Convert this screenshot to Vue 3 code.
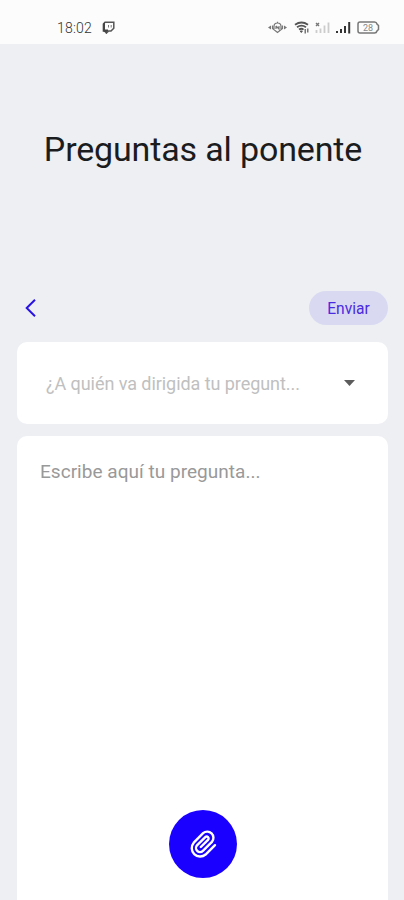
<template>
  <div class="screen">
    <header class="status">
      <span class="time">18:02</span>
      <svg class="twitch" width="13" height="13" viewBox="0 0 13 13">
        <path d="M3 1.200h8.800v6L9 10H6.600L4.500 12v-2H1.400V3z" fill="none" stroke="#555" stroke-width="1.500" />
        <path d="M1 3l2-2v7.500h3V10H4.500v2.500L1 10z" fill="#444" />
        <path d="M6.500 4v2.500M9.200 4v2.500" stroke="#777" stroke-width="1" />
      </svg>
      <svg class="vibrate" width="19" height="13" viewBox="0 0 19 13">
        <path d="M0 6.500L3 4.500v4zM19 6.500l-3-2v4z" fill="#777" />
        <path d="M6 9V5.500a3.500 3.500 0 0 1 7 0V9M4.500 4.500v3l5 4 5-4v-3M9.500 2V.8M8 5v3M8 5l3 3V5" fill="none" stroke="#777" stroke-width="1.200" />
      </svg>
      <svg class="wifi" width="16" height="13" viewBox="0 0 16 13" fill="none" stroke="#555">
        <path d="M1 3.800q6.500-4.600 13 0M3 6.300q4.500-3.300 9 0M5 8.600q2.500-1.800 4.500 0" stroke-width="1.800" />
        <path d="M6.300 10h2l-1 1.500z" fill="#555" />
        <path d="M11.200 8v4.500M13.800 7.500v4" stroke-width="1.200" />
      </svg>
      <svg class="signal" width="15" height="13" viewBox="0 0 15 13">
        <path d="M1 2l3 3M4 2L1 5" stroke="#777" stroke-width="1.400" />
        <path d="M1.500 9v3M5.500 7.500V12M9.500 4.500V12M13.500 1.500V12" stroke="#ccc" stroke-width="1.800" />
      </svg>
      <svg class="signal" width="15" height="13" viewBox="0 0 15 13">
        <path d="M1 10v2M5 8v4M9 5v7M13.200 1V12.500" stroke="#333" stroke-width="2" />
      </svg>
      <span class="battery">
        <svg width="23" height="13" viewBox="0 0 23 13">
          <path d="M3 1h14.500q2 0 2.500 2l1.500 1.500v4L20 10q-.5 2-2.500 2H3q-2 0-2-2V3q0-2 2-2z" fill="none" stroke="#777" stroke-width="1.500" />
        </svg>
        <span class="level">28</span>
      </span>
    </header>

    <h1 class="title">Preguntas al ponente</h1>

    <nav class="actions">
      <button class="back" aria-label="Volver">
        <svg width="12" height="20" viewBox="0 0 12 20">
          <path d="M11 1.700L2.700 10l8.300 8.300" fill="none" stroke="#2a12e0" stroke-width="2" />
        </svg>
      </button>
      <button class="send">Enviar</button>
    </nav>

    <div class="card select">
      <span class="select-text">¿A quién va dirigida tu pregunt...</span>
      <svg width="11" height="6" viewBox="0 0 11 6">
        <path d="M0 0h11L5.500 6z" fill="#5c5c5c" />
      </svg>
    </div>

    <div class="card question">
      <span class="placeholder">Escribe aquí tu pregunta...</span>
      <button class="attach" aria-label="Adjuntar">
        <svg width="30" height="30" viewBox="0 0 30 30">
          <path
            fill="none"
            stroke="#fff"
            stroke-width="2.400"
            stroke-linecap="round"
            d="M27 16.200L17.600 25.500A8.400 8.400 0 0 1 5.760 13.660L15.100 4.200A6.200 6.200 0 0 1 23.900 12.900L14.900 21.900A4 4 0 0 1 9.200 16.200L17.300 8.100A1.900 1.900 0 0 1 20 10.800L12.800 18"
          />
        </svg>
      </button>
    </div>
  </div>
</template>

<script setup>
</script>

<style>
body {
  margin: 0;
  background: #edeff3;
}
</style>

<style scoped>
.screen {
  width: 404px;
  height: 900px;
  overflow: hidden;
  display: flex;
  flex-direction: column;
  background: #edeff3;
  font-family: Roboto, "Liberation Sans", sans-serif;
}
button {
  border: 0;
  padding: 0;
  background: none;
  font-family: inherit;
}
svg {
  display: block;
  flex: none;
}
.status {
  box-sizing: border-box;
  height: 44px;
  flex: none;
  display: flex;
  align-items: center;
  padding: 11px 24px 0 57px;
  background: #fcfcfc;
}
.time {
  width: 45px;
  font-size: 14px;
  font-weight: 300;
  line-height: 16px;
  letter-spacing: 0.2px;
  color: #333;
}
.vibrate {
  margin-left: auto;
}
.wifi {
  margin-left: 7px;
}
.signal {
  margin-left: 5px;
}
.signal + .signal {
  margin-left: 6px;
}
.battery {
  position: relative;
  margin-left: 6px;
}
.level {
  position: absolute;
  top: 1px;
  left: 6px;
  font-size: 9px;
  line-height: 12px;
  color: #888;
}
.title {
  margin: 84px 0 0;
  padding-left: 2px;
  height: 42px;
  line-height: 42px;
  text-align: center;
  font-size: 34px;
  font-weight: 400;
  letter-spacing: -0.15px;
  color: #1b1c1e;
  white-space: nowrap;
}
.actions {
  margin-top: 121px;
  height: 34px;
  flex: none;
  display: flex;
  justify-content: space-between;
  align-items: center;
  padding: 0 16px 0 24px;
}
.send {
  width: 79px;
  height: 34px;
  padding-top: 2px;
  border-radius: 17px;
  background: #d9d9f2;
  color: #4a2be0;
  font-size: 15.6px;
  line-height: 32px;
}
.card {
  margin: 0 16px 0 17px;
  box-sizing: border-box;
  background: #fff;
  border-radius: 10px;
}
.select {
  margin-top: 17px;
  height: 82px;
  flex: none;
  display: flex;
  justify-content: space-between;
  align-items: center;
  padding: 0 33px 0 29px;
}
.select-text {
  padding-top: 2px;
  font-size: 18px;
  line-height: 24px;
  letter-spacing: -0.06px;
  color: #c0c0c0;
  white-space: nowrap;
}
.question {
  margin-top: 12px;
  flex: 1;
  display: flex;
  flex-direction: column;
  justify-content: space-between;
  padding: 24px 23px 22px;
  border-radius: 10px 10px 0 0;
}
.placeholder {
  font-size: 19px;
  line-height: 24px;
  letter-spacing: 0.03px;
  color: #999;
  white-space: nowrap;
}
.attach {
  align-self: center;
  width: 68px;
  height: 68px;
  border-radius: 50%;
  background: #1a00ff;
  display: flex;
  justify-content: center;
  align-items: center;
}
</style>
